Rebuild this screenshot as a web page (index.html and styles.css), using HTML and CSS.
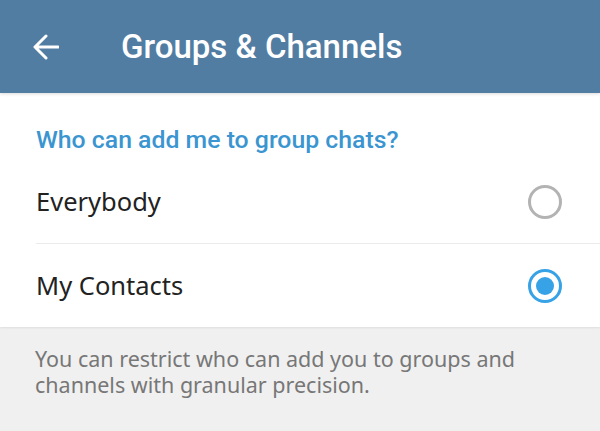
FILE: index.html
```html
<!DOCTYPE html>
<html lang="en">
<head>
  <meta charset="UTF-8" />
  <title>Groups &amp; Channels</title>
  <link rel="stylesheet" href="styles.css">
</head>
<body>

  <!-- Barra superior -->
  <div class="topbar">
    <div class="back">
      <svg width="26" height="26" viewBox="0 0 26 26">
        <path d="M25 13H2M13 2L2 13l11 11" fill="none" stroke="#fff" stroke-width="3" stroke-linecap="round" stroke-linejoin="round"/>
      </svg>
    </div>
    <div class="title">Groups &amp; Channels</div>
  </div>

  <!-- Opciones -->
  <div class="section">
    <div class="section-title">Who can add me to group chats?</div>
    <div class="option divider">
      <span>Everybody</span>
      <span class="radio"></span>
    </div>
    <div class="option">
      <span>My Contacts</span>
      <span class="radio checked"></span>
    </div>
  </div>

  <div class="footer">
    You can restrict who can add you to groups and<br>
    channels with granular precision.
  </div>

</body>
</html>
```

FILE: styles.css
```css
* {
  box-sizing: border-box;
}
html, body {
  margin: 0;
  padding: 0;
  height: 100%;
  background-color: #f0f0f0;
  font-family: 'Noto Sans', 'Open Sans', sans-serif;
  overflow: hidden;
}
.topbar {
  height: 93px;
  background-color: #527da3;
  display: flex;
  align-items: center;
  position: relative;
  z-index: 1;
  box-shadow: 0 1px 3px rgba(0, 0, 0, 0.15);
}
.back {
  width: 121px;
  padding-left: 33px;
  display: flex;
  align-items: center;
}
.back svg {
  display: block;
}
.title {
  font-family: Roboto, sans-serif;
  font-weight: 500;
  font-size: 33px;
  color: #fff;
  padding-bottom: 1px;
}
.section {
  background-color: #fff;
  padding-left: 36px;
  box-shadow: 0 1px 2px rgba(0, 0, 0, 0.08);
}
.section-title {
  height: 67px;
  padding-top: 35px;
  font-family: Roboto, sans-serif;
  font-weight: 500;
  font-size: 24.8px;
  line-height: 24px;
  color: #3a95d0;
}
.option {
  height: 83px;
  display: flex;
  align-items: center;
  justify-content: space-between;
  padding-right: 38px;
  font-size: 25.5px;
  color: #222;
}
.option span:first-child {
  padding-bottom: 2px;
}
.option.divider {
  height: 84px;
  border-bottom: 1px solid #ebebeb;
}
.radio {
  width: 34px;
  height: 34px;
  border-radius: 50%;
  border: 3px solid #b3b3b3;
  position: relative;
}
.radio.checked {
  border-color: #37a2e6;
}
.radio.checked::after {
  content: "";
  position: absolute;
  left: 5px;
  top: 5px;
  width: 18px;
  height: 18px;
  border-radius: 50%;
  background-color: #37a2e6;
}
.footer {
  padding: 19px 35px;
  font-size: 21.5px;
  line-height: 26px;
  color: #777;
}
```
